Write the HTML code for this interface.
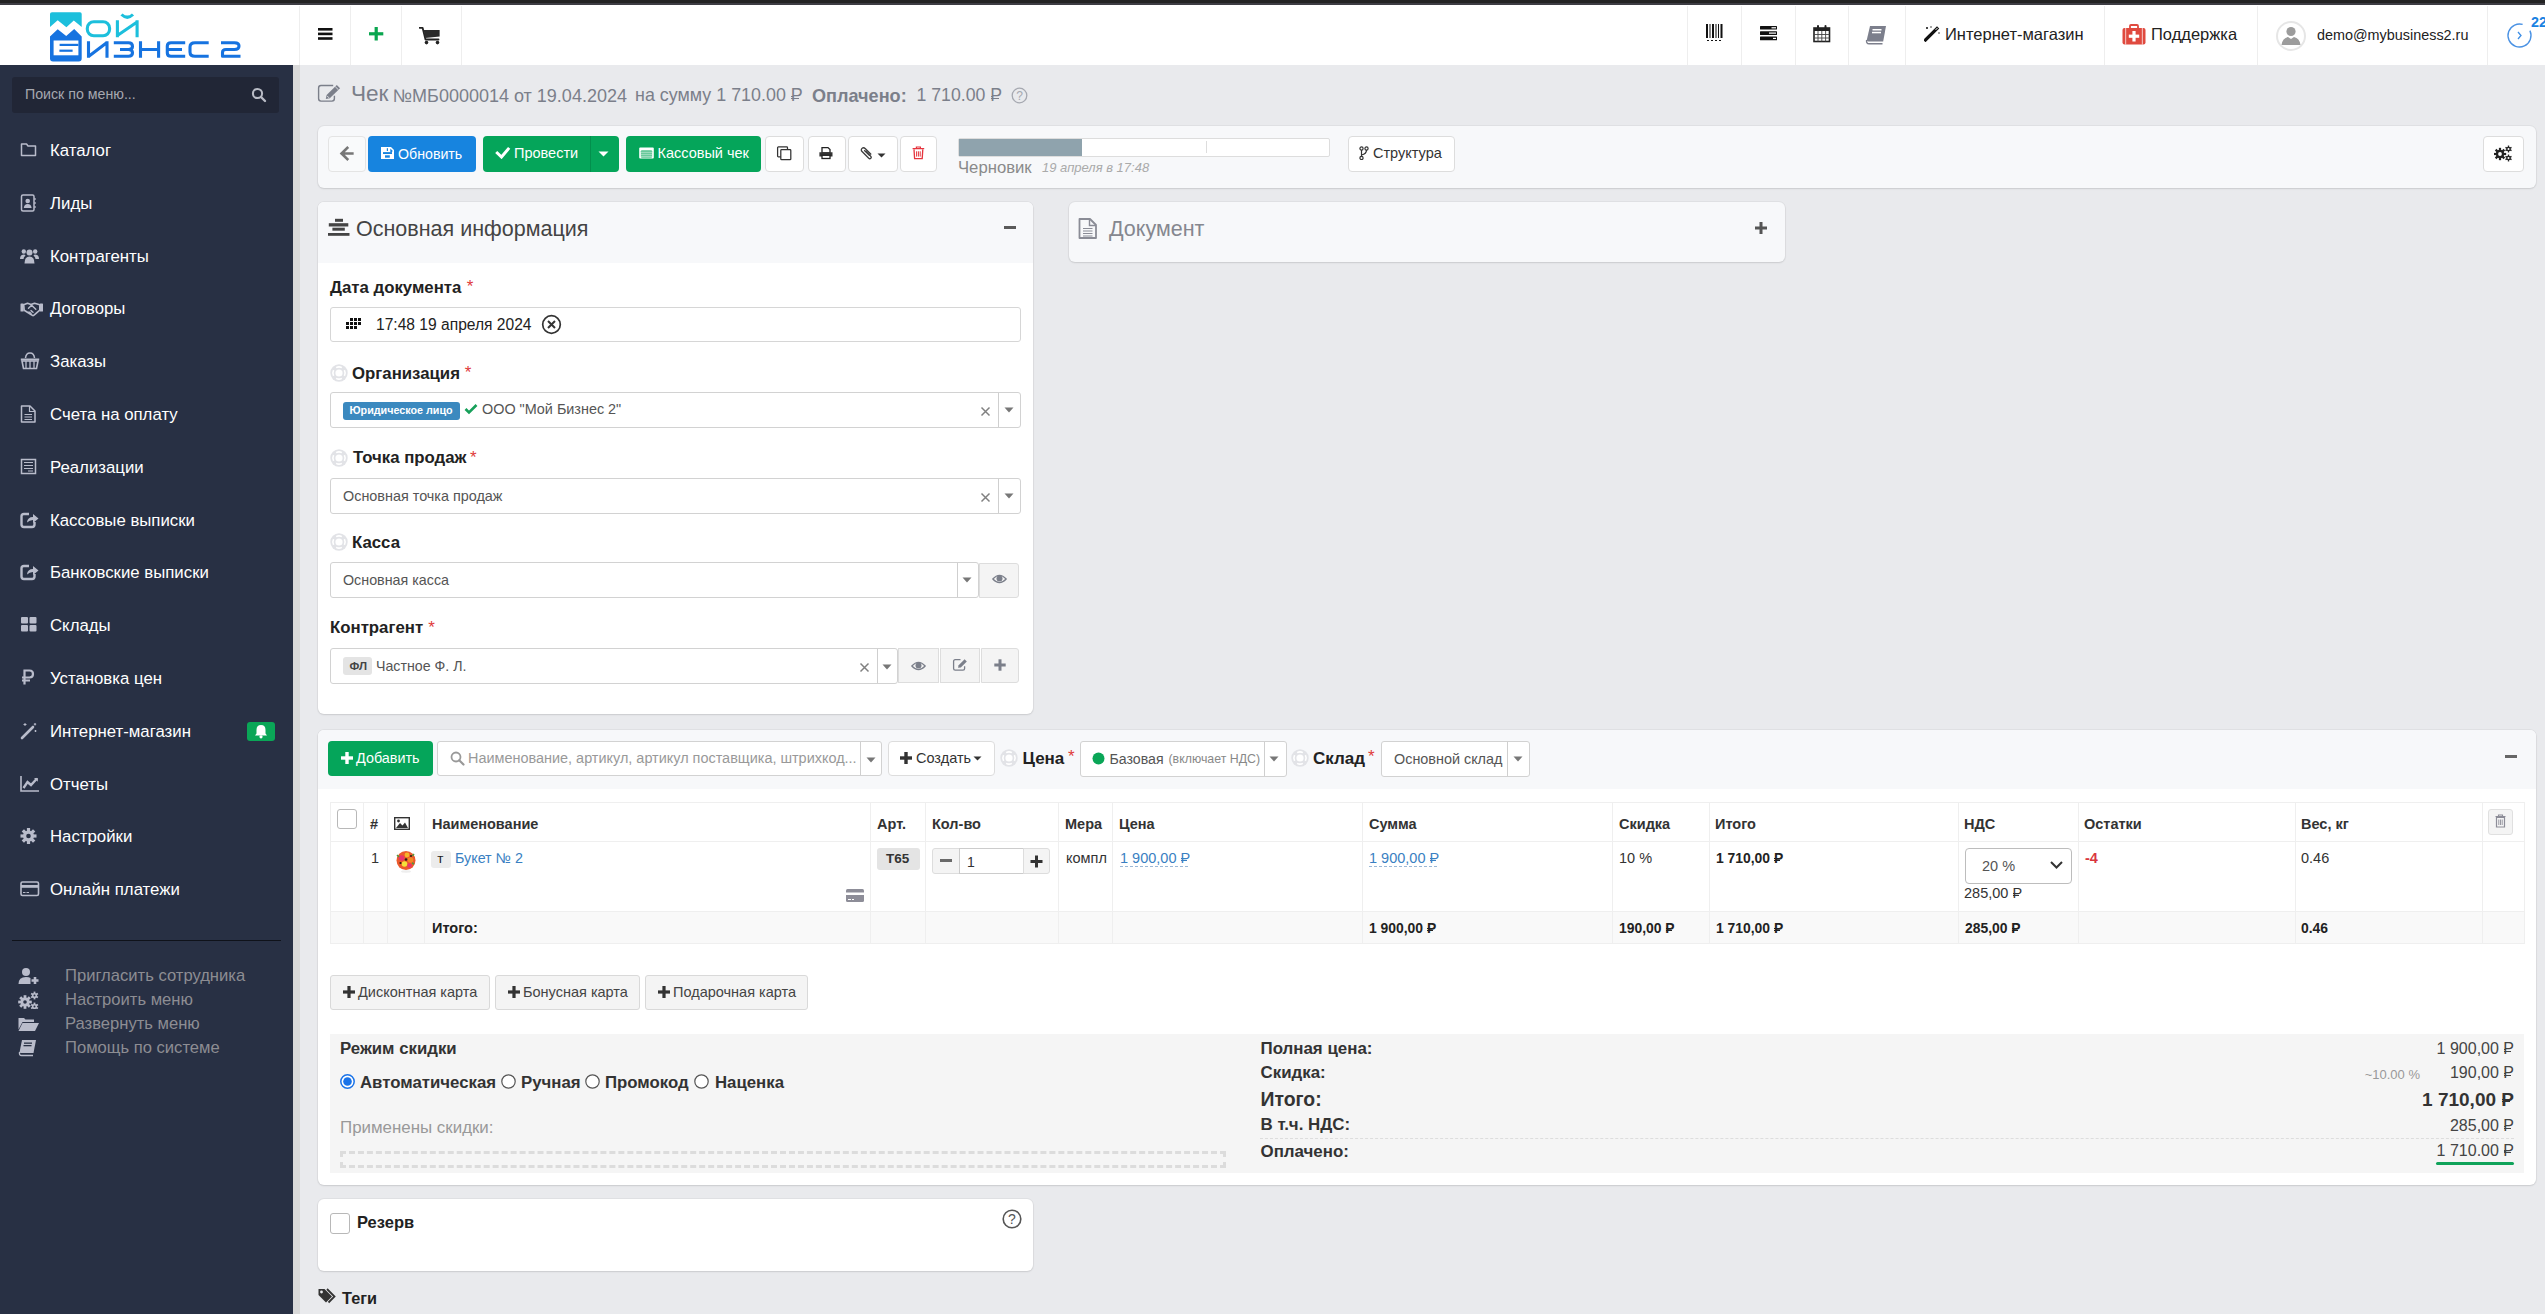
<!DOCTYPE html>
<html><head><meta charset="utf-8">
<style>
*{box-sizing:border-box;margin:0;padding:0}
html,body{width:2545px;height:1314px;overflow:hidden;background:#e9eaed;font-family:"Liberation Sans",sans-serif;color:#333}
.a{position:absolute}
.t{position:absolute;white-space:nowrap;line-height:1}
#topbar{left:0;top:0;width:2545px;height:3px;background:#232323}
#topbar2{left:0;top:3px;width:2545px;height:2px;background:#3d3c43}
#header{left:0;top:5px;width:2545px;height:60px;background:#fff}
.hsep{position:absolute;top:6px;width:1px;height:59px;background:#eeeeee}
#sidebar{left:0;top:65px;width:293px;height:1249px;background:#283044}
#sstrip{left:293px;top:65px;width:7px;height:1249px;background:#d9d9d9}
.panel{position:absolute;background:#fff;border-radius:6px;box-shadow:0 1px 1px rgba(0,0,0,.08)}
.sm{position:absolute;left:50px;font-size:16.8px;color:#fff;white-space:nowrap;line-height:1}
.smi{position:absolute;left:20px}
.sb{position:absolute;left:65px;font-size:16.6px;color:#8d8d93;white-space:nowrap;line-height:1}

.rub{position:relative;display:inline-block}
.rub::after{content:"";position:absolute;left:0.02em;top:0.58em;width:0.45em;height:0.068em;background:currentColor}
.rub::before{content:"";position:absolute;left:0.02em;top:0.47em;width:0.12em;height:0.068em;background:currentColor}
.btn{position:absolute;border-radius:4px}
.bw{background:#fff;border:1px solid #ddd}
.bg{background:#f4f4f4;border:1px solid #ddd}
.inp{position:absolute;background:#fff;border:1px solid #d2d2d2;border-radius:3px}
.vsep{position:absolute;width:1px;background:#cfcfcf}
</style></head>
<body>
<div class="a" id="topbar"></div>
<div class="a" id="topbar2"></div>
<div class="a" id="header"></div>
<div class="hsep" style="left:299px"></div>
<div class="hsep" style="left:350px"></div>
<div class="hsep" style="left:401px"></div>
<div class="hsep" style="left:461px"></div>
<div class="hsep" style="left:1687px"></div>
<div class="hsep" style="left:1741px"></div>
<div class="hsep" style="left:1795px"></div>
<div class="hsep" style="left:1848px"></div>
<div class="hsep" style="left:1905px"></div>
<div class="hsep" style="left:2104px"></div>
<div class="hsep" style="left:2257px"></div>
<div class="hsep" style="left:2487px"></div>

<div class="a" id="sidebar"></div>

<!-- LOGO -->
<svg class="a" style="left:0;top:0" width="260" height="65" viewBox="0 0 260 65">
 <path d="M52 12.3 H80 Q81.7 12.3 81.7 14 V27 L73.8 20.6 L66.4 27.3 L57.7 20.3 L50 27 V14 Q50 12.3 52 12.3 Z" fill="#1cbfdc"/>
 <path d="M50 36.4 L57.7 29.2 L66.2 36 L74.2 28.9 L81.7 36.6 V58.5 Q81.7 61.5 78.7 61.5 H53 Q50 61.5 50 58.5 Z" fill="#1673e0"/>
 <rect x="53.6" y="40.5" width="24.8" height="14.8" fill="#fff"/>
 <rect x="59.6" y="43.8" width="18.8" height="2.2" fill="#1673e0"/>
 <rect x="59.4" y="49.6" width="13.2" height="2.2" fill="#1673e0"/>
 <g fill="none" stroke="#1cbfdc" stroke-width="3.1">
  <rect x="87.3" y="21.8" width="22.3" height="13.9" rx="6.5"/>
  <path d="M117.4 20.3 V37.2 M137.1 20.3 V37.2 M117.4 35.5 L137.1 22"/>
  <path d="M121.5 14.5 Q127.3 20 133 14.5"/>
 </g>
 <g fill="none" stroke="#1673e0" stroke-width="3.1" stroke-linejoin="round">
  <path d="M88.5 41.3 V57.8 M107 41.3 V57.8 M88.5 56.5 L107 42.5"/>
  <path d="M113.8 42.8 H128.5 Q132.5 42.8 132.5 46.5 Q132.5 49.5 128.5 49.5 H120 M128.5 49.5 Q132.5 49.5 132.5 52.8 Q132.5 56.3 128.5 56.3 H113.8"/>
  <path d="M140.5 41.3 V57.8 M158.6 41.3 V57.8 M140.5 49.5 H158.6"/>
  <path d="M185.2 42.8 H171 Q167.3 42.8 167.3 46 V53 Q167.3 56.3 171 56.3 H185.2 M167.3 49.5 H182"/>
  <path d="M208.7 42.8 H195 Q190 42.8 190 47 V52 Q190 56.3 195 56.3 H208.7"/>
  <path d="M221 42.8 H234.5 Q239 42.8 239 46 Q239 49.5 234.5 49.5 H226 Q222.5 49.5 222.5 52.5 V56.3 H240.5"/>
 </g>
</svg>
<!-- header left icons -->
<svg class="a" style="left:318px;top:28px" width="15" height="12"><rect x="0" y="0" width="14.5" height="2.6" fill="#111"/><rect x="0" y="4.6" width="14.5" height="2.6" fill="#111"/><rect x="0" y="9.2" width="14.5" height="2.6" fill="#111"/></svg>
<svg class="a" style="left:369px;top:27px" width="15" height="14"><rect x="5.6" y="0" width="3.2" height="13.5" fill="#0aa64f"/><rect x="0" y="5.2" width="14.3" height="3.2" fill="#0aa64f"/></svg>
<svg class="a" style="left:419px;top:26px" width="22" height="19" viewBox="0 0 22 19"><path d="M0.5 1.8 H3.6 L6.5 13.5 H19.5" fill="none" stroke="#222" stroke-width="1.8" stroke-linecap="round" stroke-linejoin="round"/><path d="M4.6 4 H20.6 V10.5 L6.4 12 Z" fill="#2a2a2a"/><circle cx="7.5" cy="16.6" r="1.8" fill="#222"/><circle cx="18.5" cy="16.6" r="1.8" fill="#222"/></svg>
<!-- header right icons -->
<svg class="a" style="left:1705px;top:24px" width="20" height="18" viewBox="0 0 20 18"><g fill="#111"><rect x="1" y="0" width="2" height="14"/><rect x="4.5" y="0" width="1" height="14"/><rect x="7" y="0" width="2" height="14"/><rect x="10.5" y="0" width="1" height="14"/><rect x="13" y="0" width="1" height="14"/><rect x="15.5" y="0" width="2" height="14"/><rect x="2" y="16" width="2" height="1"/><rect x="6" y="16" width="2" height="1"/><rect x="10" y="16" width="2" height="1"/><rect x="14" y="16" width="2" height="1"/></g></svg>
<svg class="a" style="left:1760px;top:26px" width="18" height="15" viewBox="0 0 18 15"><g fill="#111"><rect x="0" y="0" width="17" height="3.6" rx="0.5"/><rect x="0" y="5.3" width="17" height="3.6" rx="0.5"/><rect x="0" y="10.6" width="17" height="3.6" rx="0.5"/></g><g fill="#fff"><rect x="11.5" y="1.2" width="4.5" height="1.2"/><rect x="9" y="6.5" width="7" height="1.2"/><rect x="13" y="11.8" width="3" height="1.2"/></g></svg>
<svg class="a" style="left:1813px;top:24px" width="18" height="19" viewBox="0 0 18 19"><rect x="1" y="4" width="15.5" height="13.5" fill="none" stroke="#222" stroke-width="1.6"/><rect x="1" y="4" width="15.5" height="3" fill="#222"/><path d="M1 10.5 H16.5 M1 14 H16.5 M5 7 V17.5 M8.8 7 V17.5 M12.6 7 V17.5" stroke="#444" stroke-width="0.9"/><rect x="4" y="1" width="2" height="4.5" rx="1" fill="#222"/><rect x="11.5" y="1" width="2" height="4.5" rx="1" fill="#222"/></svg>
<svg class="a" style="left:1865px;top:25px" width="23" height="20" viewBox="0 0 23 20"><path d="M5 1 H21 L18.2 16.5 H3.5 Q1.6 16.5 1.9 14.5 Z" fill="#7c7f8c"/><path d="M1.6 15 Q1.2 18.8 4 18.8 H17.5" fill="none" stroke="#7c7f8c" stroke-width="1.4"/><rect x="7.5" y="4" width="9" height="1.5" fill="#fff"/><rect x="7" y="6.8" width="9" height="1.5" fill="#fff"/></svg>
<svg class="a" style="left:1924px;top:25px" width="17" height="17" viewBox="0 0 17 17"><path d="M1.5 15 L13 3.5" stroke="#111" stroke-width="3.2" stroke-linecap="square"/><path d="M11.6 4.9 L13.6 2.9" stroke="#fff" stroke-width="1"/><path d="M2 2 L4 4 M4 2 L2 4 M7 1 V3 M15 7 V9" stroke="#333" stroke-width="0.9"/></svg>
<div class="t" style="left:1945px;top:26px;font-size:16.5px;color:#222">Интернет-магазин</div>
<svg class="a" style="left:2122px;top:24px" width="24" height="21" viewBox="0 0 24 21"><path d="M8 4 V2 Q8 1 9 1 H15 Q16 1 16 2 V4" fill="none" stroke="#e04a3f" stroke-width="1.8"/><rect x="0.5" y="4" width="23" height="16.5" rx="2" fill="#e04a3f"/><rect x="3" y="4" width="1.2" height="16.5" fill="#fff" opacity=".6"/><rect x="19.8" y="4" width="1.2" height="16.5" fill="#fff" opacity=".6"/><rect x="10.4" y="7" width="3.2" height="10.5" fill="#fff"/><rect x="6.8" y="10.6" width="10.4" height="3.2" fill="#fff"/></svg>
<div class="t" style="left:2151px;top:26px;font-size:16.5px;color:#222">Поддержка</div>
<svg class="a" style="left:2275px;top:20px" width="32" height="32" viewBox="0 0 32 32"><circle cx="16" cy="16" r="14" fill="#fff" stroke="#e6e6e6" stroke-width="2"/><circle cx="16" cy="11.5" r="4.6" fill="#9c9c9c"/><path d="M6.5 25 Q7.5 18 13 17 L16 19 L19 17 Q24.5 18 25.5 25 Z" fill="#9c9c9c"/></svg>
<div class="t" style="left:2317px;top:28px;font-size:14.4px;color:#222">demo@mybusiness2.ru</div>
<svg class="a" style="left:2506px;top:22px" width="28" height="27" viewBox="0 0 28 27"><circle cx="13.5" cy="13.5" r="11.5" fill="none" stroke="#4a92e4" stroke-width="1.35" stroke-dasharray="62 10" transform="rotate(-25 13.5 13.5)"/><path d="M12 10 L15 13.5 L12 17" fill="none" stroke="#3d8ee6" stroke-width="1.3"/></svg>
<div class="t" style="left:2531px;top:14.8px;font-size:14.3px;font-weight:bold;color:#1a82e2">22</div>

<div class="a" id="sstrip"></div>
<svg class="a" style="left:20px;top:141.0px" width="20" height="18" viewBox="0 0 20 18"><path d="M1.5 3 H6.5 L8 5 H15.5 V14.5 H1.5 Z" fill="none" stroke="#b9bccb" stroke-width="1.5" stroke-linejoin="round"/></svg>
<div class="sm" style="top:143.0px">Каталог</div>
<svg class="a" style="left:20px;top:193.8px" width="20" height="18" viewBox="0 0 20 18"><rect x="1.5" y="1" width="12.5" height="16" rx="1.5" fill="none" stroke="#b9bccb" stroke-width="1.5"/><circle cx="7.7" cy="7" r="2.3" fill="#b9bccb"/><path d="M3.8 14 Q4.2 10 7.7 10 Q11.2 10 11.6 14 Z" fill="#b9bccb"/><path d="M15 4 V6 M15 8 V10 M15 12 V14" stroke="#b9bccb" stroke-width="1.2"/></svg>
<div class="sm" style="top:195.8px">Лиды</div>
<svg class="a" style="left:20px;top:246.6px" width="20" height="18" viewBox="0 0 20 18"><circle cx="9.5" cy="5.5" r="3" fill="#b9bccb"/><circle cx="3.8" cy="4.5" r="2.2" fill="#b9bccb"/><circle cx="15.2" cy="4.5" r="2.2" fill="#b9bccb"/><path d="M4.5 16.5 Q4.5 9.5 9.5 9.5 Q14.5 9.5 14.5 16.5 Z" fill="#b9bccb"/><path d="M0 12 Q0 7.5 3.8 7.5 Q5 7.5 5.5 8.5 Q3.5 10 3.5 12 Z M19 12 Q19 7.5 15.2 7.5 Q14 7.5 13.5 8.5 Q15.5 10 15.5 12 Z" fill="#b9bccb"/></svg>
<div class="sm" style="top:248.6px">Контрагенты</div>
<svg class="a" style="left:20px;top:300.4px" width="24" height="18" viewBox="0 0 24 18"><rect x="0.5" y="3.5" width="3.2" height="8" rx="0.6" fill="#b9bccb"/><rect x="19.8" y="3.5" width="3.2" height="8" rx="0.6" fill="#b9bccb"/><path d="M3.7 4.8 L7.5 3.2 L11 4.6 L14.5 3.2 L19.8 4.8 V10.2 L14 15.2 Q12.8 16 11.8 15 L4.2 10.2 Z" fill="none" stroke="#b9bccb" stroke-width="1.6" stroke-linejoin="round"/><path d="M8.5 8.2 L11.6 5.2 L15.8 9.2 M9 12 L11 13.4 M11 10.6 L13 12.2" fill="none" stroke="#b9bccb" stroke-width="1.4" stroke-linecap="round"/></svg>
<div class="sm" style="top:301.4px">Договоры</div>
<svg class="a" style="left:20px;top:352.2px" width="20" height="18" viewBox="0 0 20 18"><path d="M0.8 6.5 H19.2 V8.5 H0.8 Z" fill="#b9bccb"/><path d="M2 9 L3.5 16.5 H16.5 L18 9 Z" fill="none" stroke="#b9bccb" stroke-width="1.6"/><path d="M6 9 V16 M10 9 V16 M14 9 V16" stroke="#b9bccb" stroke-width="1.3"/><path d="M5.5 6 Q6 1 10 1 Q14 1 14.5 6" fill="none" stroke="#b9bccb" stroke-width="1.5"/></svg>
<div class="sm" style="top:354.2px">Заказы</div>
<svg class="a" style="left:20px;top:405.0px" width="20" height="18" viewBox="0 0 20 18"><path d="M1.5 1 H10 L15 6 V17 H1.5 Z" fill="none" stroke="#b9bccb" stroke-width="1.5" stroke-linejoin="round"/><path d="M9.5 1 V6.5 H15" fill="none" stroke="#b9bccb" stroke-width="1.2"/><path d="M4.5 9.5 H12 M4.5 12 H12 M4.5 14.5 H12" stroke="#b9bccb" stroke-width="1.2"/></svg>
<div class="sm" style="top:407.0px">Счета на оплату</div>
<svg class="a" style="left:20px;top:457.8px" width="20" height="18" viewBox="0 0 20 18"><rect x="1.5" y="1.5" width="14" height="14" fill="none" stroke="#b9bccb" stroke-width="1.5"/><path d="M4 4.5 H13 M4 7.5 H13 M4 10.5 H13 M8 13 H13" stroke="#b9bccb" stroke-width="1.2"/></svg>
<div class="sm" style="top:459.8px">Реализации</div>
<svg class="a" style="left:20px;top:510.6px" width="20" height="18" viewBox="0 0 20 18"><path d="M9 3 H4 Q1.5 3 1.5 5.5 V13.5 Q1.5 16 4 16 H12 Q14.5 16 14.5 13.5 V11" fill="none" stroke="#b9bccb" stroke-width="2.4"/><path d="M7 11.5 Q7.5 6 13 6 V3 L18.5 7.5 L13 12 V9 Q9.5 9 7 11.5 Z" fill="#b9bccb"/></svg>
<div class="sm" style="top:512.6px">Кассовые выписки</div>
<svg class="a" style="left:20px;top:563.4px" width="20" height="18" viewBox="0 0 20 18"><path d="M9 3 H4 Q1.5 3 1.5 5.5 V13.5 Q1.5 16 4 16 H12 Q14.5 16 14.5 13.5 V11" fill="none" stroke="#b9bccb" stroke-width="2.4"/><path d="M7 11.5 Q7.5 6 13 6 V3 L18.5 7.5 L13 12 V9 Q9.5 9 7 11.5 Z" fill="#b9bccb"/></svg>
<div class="sm" style="top:565.4px">Банковские выписки</div>
<svg class="a" style="left:20px;top:616.2px" width="20" height="18" viewBox="0 0 20 18"><rect x="1" y="1" width="7" height="6.5" rx="1" fill="#b9bccb"/><rect x="9.5" y="1" width="7" height="6.5" rx="1" fill="#b9bccb"/><rect x="1" y="9" width="7" height="6.5" rx="1" fill="#b9bccb"/><rect x="9.5" y="9" width="7" height="6.5" rx="1" fill="#b9bccb"/></svg>
<div class="sm" style="top:618.2px">Склады</div>
<svg class="a" style="left:20px;top:669.0px" width="20" height="18" viewBox="0 0 20 18"><path d="M4.5 15.5 V1.5 H9.5 Q13 1.5 13 5 Q13 8.5 9.5 8.5 H2 M2 11.5 H10" fill="none" stroke="#b9bccb" stroke-width="2.2"/></svg>
<div class="sm" style="top:671.0px">Установка цен</div>
<svg class="a" style="left:20px;top:721.8px" width="20" height="18" viewBox="0 0 20 18"><path d="M2 16 L13 5" stroke="#b9bccb" stroke-width="2.6" stroke-linecap="round"/><path d="M5 1 V4 M3.5 2.5 H6.5 M15 1 V3.5 M13.8 2.2 H16.2 M15.5 8 V10 M14.5 9 H16.5" stroke="#b9bccb" stroke-width="1"/></svg>
<div class="sm" style="top:723.8px">Интернет-магазин</div>
<svg class="a" style="left:20px;top:774.6px" width="20" height="18" viewBox="0 0 20 18"><path d="M1 1 V16 H19" fill="none" stroke="#b9bccb" stroke-width="1.6"/><path d="M3.5 13 L7.5 7 L11 10 L17 3.5" fill="none" stroke="#b9bccb" stroke-width="2.4"/><path d="M14 3 H17.8 V6.8 Z" fill="#b9bccb"/></svg>
<div class="sm" style="top:776.6px">Отчеты</div>
<svg class="a" style="left:20px;top:827.4px" width="20" height="18" viewBox="0 0 20 18"><g transform="translate(8.5 9)"><circle r="5.5" fill="#b9bccb"/><g fill="#b9bccb"><rect x="-1.6" y="-8" width="3.2" height="16"/><rect x="-1.6" y="-8" width="3.2" height="16" transform="rotate(45)"/><rect x="-1.6" y="-8" width="3.2" height="16" transform="rotate(90)"/><rect x="-1.6" y="-8" width="3.2" height="16" transform="rotate(135)"/></g><circle r="2.3" fill="#283044"/></g></svg>
<div class="sm" style="top:829.4px">Настройки</div>
<svg class="a" style="left:20px;top:880.2px" width="20" height="18" viewBox="0 0 20 18"><rect x="1" y="2" width="17.5" height="13.5" rx="1.5" fill="none" stroke="#b9bccb" stroke-width="1.6"/><rect x="1" y="5" width="17.5" height="2.8" fill="#b9bccb"/><path d="M3 12.5 H5.5 M6.5 12.5 H9" stroke="#b9bccb" stroke-width="1"/></svg>
<div class="sm" style="top:882.2px">Онлайн платежи</div>
<div class="a" style="left:247px;top:722px;width:28px;height:19px;background:#0aa657;border-radius:3px"></div>
<svg class="a" style="left:254px;top:724px" width="14" height="15" viewBox="0 0 14 15"><path d="M7 1 Q2.5 1 2.5 6 V9.5 L1 11.5 H13 L11.5 9.5 V6 Q11.5 1 7 1 Z" fill="#fff"/><circle cx="7" cy="12.8" r="1.6" fill="#fff"/></svg>
<div class="a" style="left:12px;top:940px;width:269px;height:1px;background:#0f121a"></div>
<svg class="a" style="left:18px;top:967.0px" width="22" height="18" viewBox="0 0 22 18"><circle cx="8" cy="5" r="4" fill="#b9bccb"/><path d="M0.5 17 Q0.5 10 8 10 Q11 10 12.5 11 V17 Z" fill="#b9bccb"/><path d="M17 10 V17 M13.5 13.5 H20.5" stroke="#b9bccb" stroke-width="2.6"/></svg>
<div class="sb" style="top:968.0px">Пригласить сотрудника</div>
<svg class="a" style="left:18px;top:991.0px" width="22" height="18" viewBox="0 0 22 18"><g transform="translate(7 11)"><circle r="4.5" fill="#b9bccb"/><g fill="#b9bccb"><rect x="-1.4" y="-6.8" width="2.8" height="13.6"/><rect x="-1.4" y="-6.8" width="2.8" height="13.6" transform="rotate(45)"/><rect x="-1.4" y="-6.8" width="2.8" height="13.6" transform="rotate(90)"/><rect x="-1.4" y="-6.8" width="2.8" height="13.6" transform="rotate(135)"/></g><circle r="1.8" fill="#283044"/></g><g transform="translate(16.5 4.5)"><circle r="2.6" fill="#b9bccb"/><g fill="#b9bccb"><rect x="-0.9" y="-3.9" width="1.8" height="7.8"/><rect x="-0.9" y="-3.9" width="1.8" height="7.8" transform="rotate(60)"/><rect x="-0.9" y="-3.9" width="1.8" height="7.8" transform="rotate(120)"/></g><circle r="1" fill="#283044"/></g><g transform="translate(16.5 15.5)"><circle r="2.6" fill="#b9bccb"/><g fill="#b9bccb"><rect x="-0.9" y="-3.9" width="1.8" height="7.8"/><rect x="-0.9" y="-3.9" width="1.8" height="7.8" transform="rotate(60)"/><rect x="-0.9" y="-3.9" width="1.8" height="7.8" transform="rotate(120)"/></g><circle r="1" fill="#283044"/></g></svg>
<div class="sb" style="top:992.0px">Настроить меню</div>
<svg class="a" style="left:18px;top:1015.0px" width="22" height="18" viewBox="0 0 22 18"><path d="M0.5 3 H6 L7.5 4.5 H16 V7 H4.5 L0.5 14.5 Z" fill="#b9bccb"/><path d="M4.5 8 H21 L17 16 H0.5 Z" fill="#b9bccb"/></svg>
<div class="sb" style="top:1016.0px">Развернуть меню</div>
<svg class="a" style="left:18px;top:1039.0px" width="22" height="18" viewBox="0 0 22 18"><path d="M4 1 H18 L15.5 14 H3 Q1.5 14 1.7 12.5 Z" fill="#b9bccb"/><path d="M1.5 13 Q1 16.5 3.5 16.5 H15" fill="none" stroke="#b9bccb" stroke-width="1.3"/><rect x="6" y="3.5" width="8" height="1.3" fill="#283044"/><rect x="5.5" y="6" width="8" height="1.3" fill="#283044"/></svg>
<div class="sb" style="top:1040.0px">Помощь по системе</div>
<div class="a" style="left:12px;top:77px;width:267px;height:36px;background:#212636;border-radius:3px"></div>
<div class="t" style="left:25px;top:87px;font-size:14.2px;color:#a6a8b0">Поиск по меню...</div>
<svg class="a" style="left:251px;top:87px" width="16" height="16" viewBox="0 0 16 16"><circle cx="6.5" cy="6.5" r="4.6" fill="none" stroke="#b9bcc6" stroke-width="2"/><path d="M10 10 L14 14" stroke="#b9bcc6" stroke-width="2.4" stroke-linecap="round"/></svg>

<div class="a" style="left:318px;top:126px;width:2218px;height:62px;background:#f7f8fa;border-radius:6px;box-shadow:0 0 0 1px rgba(0,0,0,.035),0 1px 2px rgba(0,0,0,.10);"></div>
<div class="a" style="left:318px;top:202px;width:715px;height:512px;background:#fff;border-radius:6px;box-shadow:0 0 0 1px rgba(0,0,0,.035),0 1px 2px rgba(0,0,0,.10);"></div>
<div class="a" style="left:318px;top:202px;width:715px;height:61px;background:#f7f8fa;border-radius:6px 6px 0 0;"></div>
<div class="a" style="left:1069px;top:202px;width:716px;height:60px;background:#f7f8fa;border-radius:6px;box-shadow:0 0 0 1px rgba(0,0,0,.035),0 1px 2px rgba(0,0,0,.10);"></div>
<div class="a" style="left:318px;top:730px;width:2218px;height:455px;background:#fff;border-radius:6px;box-shadow:0 0 0 1px rgba(0,0,0,.035),0 1px 2px rgba(0,0,0,.10);"></div>
<div class="a" style="left:318px;top:730px;width:2218px;height:59px;background:#f7f8fa;border-radius:6px 6px 0 0;"></div>
<div class="a" style="left:318px;top:1199px;width:715px;height:72px;background:#fff;border-radius:6px;box-shadow:0 0 0 1px rgba(0,0,0,.035),0 1px 2px rgba(0,0,0,.10);"></div>
<svg class="a" style="left:314px;top:80px" width="32" height="28" viewBox="0 0 32 28"><path d="M19.2 5.5 H7 Q4.6 5.5 4.6 8 V18.6 Q4.6 21.1 7 21.1 H18 Q20.4 21.1 20.4 18.6 V15.8" fill="none" stroke="#7b7f8a" stroke-width="1.4"/><path d="M11.8 18.9 L12.6 15.1 L22.8 4.9 L26.1 8.2 L15.8 18.2 Z" fill="#7b7f8a"/><path d="M21.2 6.6 L24.5 9.9" stroke="#e9eaed" stroke-width="0.9"/><path d="M13.1 15.9 L15.1 17.9" stroke="#e9eaed" stroke-width="0.9"/></svg>
<div class="t" style="left:351px;top:83.17px;font-size:22.6px;color:#7b7f8a;">Чек</div>
<div class="t" style="left:392.8px;top:87.06px;font-size:18px;color:#7b7f8a;">№МБ0000014 от 19.04.2024</div>
<div class="t" style="left:635px;top:87.15px;font-size:17.9px;color:#7b7f8a;">на сумму 1 710.00 <span class="rub">Р</span></div>
<div class="t" style="left:812px;top:86.98px;font-size:18.1px;color:#7b7f8a;font-weight:bold;">Оплачено:</div>
<div class="t" style="left:916.5px;top:87.32px;font-size:17.7px;color:#7b7f8a;">1 710.00 <span class="rub">Р</span></div>
<svg class="a" style="left:1011px;top:87px" width="17" height="17" viewBox="0 0 17 17"><circle cx="8.5" cy="8.5" r="7.3" fill="none" stroke="#a5a8b0" stroke-width="1.3"/><text x="8.5" y="13" font-family="Liberation Sans" font-size="12" fill="#a5a8b0" text-anchor="middle">?</text></svg>
<div class="a" style="left:328px;top:136px;width:38px;height:36px;background:#f9fafb;border:1px solid #e4e4e4;border-radius:4px;"></div>
<svg class="a" style="left:339px;top:146px" width="15" height="15" viewBox="0 0 15 15"><path d="M8.3 1.9 L2.6 7.5 L8.3 13.1 M3 7.5 H13.3" fill="none" stroke="#777" stroke-width="2.7" stroke-linejoin="miter" stroke-linecap="square"/></svg>
<div class="a" style="left:368px;top:136px;width:108px;height:36px;background:#1784df;border-radius:4px;"></div>
<svg class="a" style="left:381px;top:147px" width="13" height="12" viewBox="0 0 13 12"><path d="M0 0 H10 L13 3 V12 H0 Z" fill="#fff"/><rect x="2" y="5.1" width="9" height="1.9" fill="#1784df"/><rect x="4" y="8.3" width="4.8" height="2.4" fill="#1784df"/><rect x="5.8" y="1.2" width="1.2" height="2.8" fill="#1784df"/><path d="M9.3 1.5 L11.3 3.5 V5.1 H9.3 Z" fill="#1784df"/></svg>
<div class="t" style="left:398px;top:146.58px;font-size:14.2px;color:#fff;">Обновить</div>
<div class="a" style="left:483px;top:136px;width:136px;height:36px;background:#05a55a;border-radius:4px;"></div>
<div class="a" style="left:590px;top:136px;width:1px;height:36px;background:#038f4d;"></div>
<svg class="a" style="left:495px;top:146px" width="16" height="13" viewBox="0 0 16 13"><path d="M2.3 7 L6.5 11 L13.2 3" fill="none" stroke="#fff" stroke-width="3" stroke-linecap="square"/></svg>
<div class="t" style="left:514px;top:146.32px;font-size:14.5px;color:#fff;">Провести</div>
<svg class="a" style="left:598px;top:151px" width="12" height="6" viewBox="0 0 12 6"><path d="M0.5 0.5 H10.5 L5.5 5.5 Z" fill="#fff"/></svg>
<div class="a" style="left:626px;top:136px;width:135px;height:36px;background:#05a55a;border-radius:4px;"></div>
<svg class="a" style="left:639px;top:146.5px" width="15" height="12" viewBox="0 0 15 12"><rect x="0.2" y="0.5" width="14.6" height="11" rx="1" fill="#fff"/><rect x="1.9" y="3.4" width="11.2" height="7.1" rx="0.8" fill="#05a55a"/><path d="M2 5.1 H13 M2 7.1 H13 M2 9.1 H13" stroke="#fff" stroke-width="1"/></svg>
<div class="t" style="left:657.5px;top:146.32px;font-size:14.5px;color:#fff;">Кассовый чек</div>
<div class="a" style="left:765px;top:136px;width:39px;height:36px;background:#fff;border:1px solid #ddd;border-radius:4px;"></div>
<svg class="a" style="left:776px;top:145px" width="16" height="16" viewBox="0 0 16 16"><rect x="1.6" y="1.9" width="9.9" height="10" rx="0.8" fill="none" stroke="#333" stroke-width="1.25"/><rect x="4.8" y="4.6" width="10" height="10.1" rx="0.8" fill="#fff" stroke="#333" stroke-width="1.25"/></svg>
<div class="a" style="left:808px;top:136px;width:38px;height:36px;background:#fff;border:1px solid #ddd;border-radius:4px;"></div>
<svg class="a" style="left:818px;top:145px" width="16" height="16" viewBox="0 0 16 16"><path d="M4 2.6 H10 L12 4.6 V8 H4 Z" fill="none" stroke="#222" stroke-width="1.3"/><path d="M1.4 7.3 H14.5 V11.5 H12 V10.3 H4 V11.5 H1.4 Z" fill="#333"/><rect x="4" y="10.3" width="8" height="3.2" fill="#fff" stroke="#222" stroke-width="1.3"/></svg>
<div class="a" style="left:848px;top:136px;width:50px;height:36px;background:#fff;border:1px solid #ddd;border-radius:4px;"></div>
<svg class="a" style="left:860px;top:146px" width="14" height="14" viewBox="0 0 14 14"><path d="M5.5 5 L10.5 10 Q11.8 11.3 10.8 12.3 Q9.8 13.3 8.5 12 L2.3 5.8 Q0.5 4 2 2.4 Q3.6 0.9 5.4 2.7 L11.2 8.5 M4.2 4.2 L9.6 9.6" fill="none" stroke="#3c3c3c" stroke-width="1.3"/></svg>
<svg class="a" style="left:877px;top:153px" width="9" height="5" viewBox="0 0 9 5"><path d="M0.5 0.5 H8.5 L4.5 4.5 Z" fill="#333"/></svg>
<div class="a" style="left:900px;top:136px;width:37px;height:36px;background:#fff;border:1px solid #ddd;border-radius:4px;"></div>
<svg class="a" style="left:912px;top:146px" width="13" height="14" viewBox="0 0 13 14"><path d="M0.6 2.6 H12.2 M4.4 2.4 V1 H8.4 V2.4" fill="none" stroke="#e5343d" stroke-width="1.2"/><path d="M2 3.4 L2.6 12.6 H10.2 L10.8 3.4" fill="none" stroke="#e5343d" stroke-width="1.3"/><path d="M4.6 5.3 V10.6 M6.4 5.3 V10.6 M8.2 5.3 V10.6" stroke="#e5343d" stroke-width="1"/></svg>
<div class="a" style="left:958px;top:138px;width:372px;height:19px;background:#fff;border:1px solid #ddd;border-radius:2px;"></div>
<div class="a" style="left:959px;top:139px;width:123px;height:17px;background:#8fa3ad;"></div>
<div class="a" style="left:1206px;top:141px;width:1px;height:12px;background:#ddd;"></div>
<div class="t" style="left:958px;top:160.36px;font-size:16.7px;color:#8a8a8a;">Черновик</div>
<div class="t" style="left:1042px;top:160.79px;font-size:13px;color:#aaa;font-style:italic;">19 апреля в 17:48</div>
<div class="a" style="left:1348px;top:136px;width:107px;height:36px;background:#fff;border:1px solid #ddd;border-radius:4px;"></div>
<svg class="a" style="left:1359px;top:146px" width="10" height="14" viewBox="0 0 10 14"><circle cx="2.5" cy="2.5" r="1.6" fill="none" stroke="#333" stroke-width="1.2"/><circle cx="7.5" cy="2.5" r="1.6" fill="none" stroke="#333" stroke-width="1.2"/><circle cx="2.5" cy="12" r="1.6" fill="none" stroke="#333" stroke-width="1.2"/><path d="M2.5 4 V10.5 M7.5 4 Q7.5 8 2.5 9" fill="none" stroke="#333" stroke-width="1.2"/></svg>
<div class="t" style="left:1373px;top:146.32px;font-size:14.5px;color:#333;">Структура</div>
<div class="a" style="left:2483px;top:136px;width:41px;height:36px;background:#fff;border:1px solid #ddd;border-radius:4px;"></div>
<svg class="a" style="left:2494px;top:145px" width="20" height="18" viewBox="0 0 20 18"><g transform="translate(6 9)"><circle r="4.2" fill="#222"/><rect x="-1.1" y="-6.180000000000001" width="2.2" height="12.360000000000001" fill="#222" transform="rotate(0.0)"/><rect x="-1.1" y="-6.180000000000001" width="2.2" height="12.360000000000001" fill="#222" transform="rotate(45.0)"/><rect x="-1.1" y="-6.180000000000001" width="2.2" height="12.360000000000001" fill="#222" transform="rotate(90.0)"/><rect x="-1.1" y="-6.180000000000001" width="2.2" height="12.360000000000001" fill="#222" transform="rotate(135.0)"/><circle r="1.8900000000000001" fill="#fff"/></g><g transform="translate(14.5 4)"><circle r="2.2" fill="#222"/><rect x="-0.7" y="-3.46" width="1.4" height="6.92" fill="#222" transform="rotate(0.0)"/><rect x="-0.7" y="-3.46" width="1.4" height="6.92" fill="#222" transform="rotate(60.0)"/><rect x="-0.7" y="-3.46" width="1.4" height="6.92" fill="#222" transform="rotate(120.0)"/><circle r="0.9900000000000001" fill="#fff"/></g><g transform="translate(14.5 13)"><circle r="2.2" fill="#222"/><rect x="-0.7" y="-3.46" width="1.4" height="6.92" fill="#222" transform="rotate(0.0)"/><rect x="-0.7" y="-3.46" width="1.4" height="6.92" fill="#222" transform="rotate(60.0)"/><rect x="-0.7" y="-3.46" width="1.4" height="6.92" fill="#222" transform="rotate(120.0)"/><circle r="0.9900000000000001" fill="#fff"/></g></svg>
<svg class="a" style="left:328px;top:218px" width="23" height="19" viewBox="0 0 23 19"><rect x="7" y="0.8" width="8" height="3" fill="#444"/><rect x="0.8" y="5.2" width="19.5" height="3.3" fill="#444"/><rect x="4.4" y="9.7" width="12.4" height="3" fill="#444"/><rect x="0" y="15" width="21.5" height="2.8" fill="#444"/></svg>
<div class="t" style="left:356px;top:218.50px;font-size:21.5px;color:#444;">Основная информация</div>
<div class="a" style="left:1004px;top:226px;width:12px;height:3px;background:#5a5a5a;"></div>
<div class="t" style="left:330px;top:279.58px;font-size:16.8px;color:#222;font-weight:bold;">Дата документа</div>
<div class="t" style="left:466.8px;top:277.91px;font-size:17px;color:#e03b3b;">*</div>
<div class="inp" style="left:330px;top:307px;width:691px;height:35px;border-color:#d6d6d6"></div>
<svg class="a" style="left:346px;top:318px" width="17" height="11" viewBox="0 0 17 11"><g fill="#111"><rect x="0" y="4" width="3" height="3"/><rect x="4" y="0" width="3" height="3"/><rect x="8" y="0" width="3" height="3"/><rect x="12" y="0" width="3" height="3"/><rect x="4" y="4" width="3" height="3"/><rect x="8" y="4" width="3" height="3"/><rect x="12" y="4" width="3" height="3"/><rect x="0" y="8" width="3" height="3"/><rect x="4" y="8" width="3" height="3"/><rect x="8" y="8" width="3" height="3"/></g></svg>
<div class="t" style="left:376px;top:317.09px;font-size:15.6px;color:#222;">17:48 19 апреля 2024</div>
<svg class="a" style="left:541px;top:314px" width="21" height="21" viewBox="0 0 21 21"><circle cx="10.5" cy="10.5" r="8.8" fill="none" stroke="#333" stroke-width="1.7"/><path d="M7 7 L14 14 M14 7 L7 14" stroke="#333" stroke-width="2"/></svg>
<svg class="a" style="left:329.5px;top:364px" width="18" height="18" viewBox="0 0 18 18"><circle cx="9.0" cy="9.0" r="8.7" fill="#e2e3e7"/><circle cx="9.0" cy="9.0" r="3.6" fill="#fff"/><path d="M14.39 6.14 A6.1 6.1 0 0 1 14.39 11.86" fill="none" stroke="#fff" stroke-width="1.6"/><path d="M11.86 14.39 A6.1 6.1 0 0 1 6.14 14.39" fill="none" stroke="#fff" stroke-width="1.6"/><path d="M3.61 11.86 A6.1 6.1 0 0 1 3.61 6.14" fill="none" stroke="#fff" stroke-width="1.6"/><path d="M6.14 3.61 A6.1 6.1 0 0 1 11.86 3.61" fill="none" stroke="#fff" stroke-width="1.6"/></svg>
<div class="t" style="left:352px;top:365.58px;font-size:16.8px;color:#222;font-weight:bold;">Организация</div>
<div class="t" style="left:464.7px;top:363.91px;font-size:17px;color:#e03b3b;">*</div>
<div class="inp" style="left:330px;top:392px;width:691px;height:36px"></div>
<div class="a" style="left:998px;top:393px;width:1px;height:34px;background:#cfcfcf;"></div>
<div class="a" style="left:343px;top:402px;width:117px;height:18px;background:#3b89bf;border-radius:3px;"></div>
<div class="t" style="left:349.5px;top:405.40px;font-size:10.75px;color:#fff;font-weight:bold;">Юридическое лицо</div>
<svg class="a" style="left:464px;top:403px" width="14" height="12" viewBox="0 0 14 12"><path d="M1.5 6 L5 9.5 L12.5 2" fill="none" stroke="#17a05a" stroke-width="2.6"/></svg>
<div class="t" style="left:482px;top:401.81px;font-size:14.4px;color:#555;">ООО "Мой Бизнес 2"</div>
<svg class="a" style="left:980px;top:406px" width="11" height="11" viewBox="0 0 11 11"><path d="M1.5 1.5 L9.5 9.5 M9.5 1.5 L1.5 9.5" stroke="#808080" stroke-width="1.5"/></svg>
<svg class="a" style="left:1004px;top:407px" width="10" height="6" viewBox="0 0 10 6"><path d="M0.5 0.5 H9.5 L5 5.5 Z" fill="#777"/></svg>
<svg class="a" style="left:329.5px;top:448.5px" width="18" height="18" viewBox="0 0 18 18"><circle cx="9.0" cy="9.0" r="8.7" fill="#e2e3e7"/><circle cx="9.0" cy="9.0" r="3.6" fill="#fff"/><path d="M14.39 6.14 A6.1 6.1 0 0 1 14.39 11.86" fill="none" stroke="#fff" stroke-width="1.6"/><path d="M11.86 14.39 A6.1 6.1 0 0 1 6.14 14.39" fill="none" stroke="#fff" stroke-width="1.6"/><path d="M3.61 11.86 A6.1 6.1 0 0 1 3.61 6.14" fill="none" stroke="#fff" stroke-width="1.6"/><path d="M6.14 3.61 A6.1 6.1 0 0 1 11.86 3.61" fill="none" stroke="#fff" stroke-width="1.6"/></svg>
<div class="t" style="left:353px;top:450.28px;font-size:16.8px;color:#222;font-weight:bold;">Точка продаж</div>
<div class="t" style="left:470px;top:448.61px;font-size:17px;color:#e03b3b;">*</div>
<div class="inp" style="left:330px;top:478px;width:691px;height:36px"></div>
<div class="a" style="left:998px;top:479px;width:1px;height:34px;background:#cfcfcf;"></div>
<div class="t" style="left:343px;top:488.61px;font-size:14.4px;color:#555;">Основная точка продаж</div>
<svg class="a" style="left:980px;top:492px" width="11" height="11" viewBox="0 0 11 11"><path d="M1.5 1.5 L9.5 9.5 M9.5 1.5 L1.5 9.5" stroke="#808080" stroke-width="1.5"/></svg>
<svg class="a" style="left:1004px;top:493px" width="10" height="6" viewBox="0 0 10 6"><path d="M0.5 0.5 H9.5 L5 5.5 Z" fill="#777"/></svg>
<svg class="a" style="left:329.5px;top:533px" width="18" height="18" viewBox="0 0 18 18"><circle cx="9.0" cy="9.0" r="8.7" fill="#e2e3e7"/><circle cx="9.0" cy="9.0" r="3.6" fill="#fff"/><path d="M14.39 6.14 A6.1 6.1 0 0 1 14.39 11.86" fill="none" stroke="#fff" stroke-width="1.6"/><path d="M11.86 14.39 A6.1 6.1 0 0 1 6.14 14.39" fill="none" stroke="#fff" stroke-width="1.6"/><path d="M3.61 11.86 A6.1 6.1 0 0 1 3.61 6.14" fill="none" stroke="#fff" stroke-width="1.6"/><path d="M6.14 3.61 A6.1 6.1 0 0 1 11.86 3.61" fill="none" stroke="#fff" stroke-width="1.6"/></svg>
<div class="t" style="left:352px;top:535.18px;font-size:16.8px;color:#222;font-weight:bold;">Касса</div>
<div class="inp" style="left:330px;top:562px;width:649px;height:36px"></div>
<div class="a" style="left:957px;top:563px;width:1px;height:34px;background:#cfcfcf;"></div>
<div class="t" style="left:343px;top:573.09px;font-size:14.3px;color:#555;">Основная касса</div>
<svg class="a" style="left:962px;top:577px" width="10" height="6" viewBox="0 0 10 6"><path d="M0.5 0.5 H9.5 L5 5.5 Z" fill="#777"/></svg>
<div class="a" style="left:979px;top:563px;width:40px;height:35px;background:#f4f4f4;border:1px solid #ddd;border-radius:0 3px 3px 0;"></div>
<svg class="a" style="left:991.5px;top:574px" width="15" height="10" viewBox="0 0 15 10"><path d="M0.8 5 Q7.5 -2.2 14.2 5 Q7.5 12.2 0.8 5 Z" fill="none" stroke="#7b7f8a" stroke-width="1.2"/><circle cx="7.5" cy="4.6" r="3" fill="#7b7f8a"/></svg>
<div class="t" style="left:330px;top:620.28px;font-size:16.8px;color:#222;font-weight:bold;">Контрагент</div>
<div class="t" style="left:428.3px;top:618.61px;font-size:17px;color:#e03b3b;">*</div>
<div class="inp" style="left:330px;top:648px;width:568px;height:36px"></div>
<div class="a" style="left:877px;top:649px;width:1px;height:34px;background:#cfcfcf;"></div>
<div class="a" style="left:343px;top:657px;width:29px;height:18px;background:#e4e4e4;border-radius:3px;"></div>
<div class="t" style="left:349.5px;top:660.76px;font-size:11.5px;color:#444;font-weight:bold;">ФЛ</div>
<div class="t" style="left:376px;top:658.78px;font-size:14.2px;color:#555;">Частное Ф. Л.</div>
<svg class="a" style="left:858.5px;top:662px" width="11" height="11" viewBox="0 0 11 11"><path d="M1.5 1.5 L9.5 9.5 M9.5 1.5 L1.5 9.5" stroke="#808080" stroke-width="1.5"/></svg>
<svg class="a" style="left:882px;top:664px" width="10" height="6" viewBox="0 0 10 6"><path d="M0.5 0.5 H9.5 L5 5.5 Z" fill="#777"/></svg>
<div class="a" style="left:898px;top:648px;width:41px;height:35px;background:#f4f4f4;border:1px solid #ddd;"></div>
<svg class="a" style="left:911px;top:660.5px" width="15" height="10" viewBox="0 0 15 10"><path d="M0.8 5 Q7.5 -2.2 14.2 5 Q7.5 12.2 0.8 5 Z" fill="none" stroke="#7b7f8a" stroke-width="1.2"/><circle cx="7.5" cy="4.6" r="3" fill="#7b7f8a"/></svg>
<div class="a" style="left:940px;top:648px;width:40px;height:35px;background:#f4f4f4;border:1px solid #ddd;"></div>
<svg class="a" style="left:952px;top:658px" width="16" height="14" viewBox="0 0 16 14"><path d="M8.5 1.7 H3.2 Q1.6 1.7 1.6 3.3 V10.6 Q1.6 12.2 3.2 12.2 H11 Q12.6 12.2 12.6 10.6 V8.2" fill="none" stroke="#7b7f8a" stroke-width="1.3"/><path d="M6 9.8 L6.6 7.2 L12.6 1.2 L14.8 3.4 L8.8 9.4 Z" fill="#7b7f8a"/></svg>
<div class="a" style="left:981px;top:648px;width:38px;height:35px;background:#f4f4f4;border:1px solid #ddd;border-radius:0 3px 3px 0;"></div>
<svg class="a" style="left:993.5px;top:658.5px" width="12" height="12" viewBox="0 0 12 12"><rect x="4.5" y="0.3" width="3" height="11.4" fill="#7b7f8a"/><rect x="0.3" y="4.5" width="11.4" height="3" fill="#7b7f8a"/></svg>
<svg class="a" style="left:1078px;top:218px" width="20" height="21" viewBox="0 0 20 21"><path d="M1.5 1 H12 L18 7 V20 H1.5 Z" fill="none" stroke="#8a8c96" stroke-width="1.8" stroke-linejoin="round"/><path d="M11.5 1 V7.5 H18" fill="none" stroke="#8a8c96" stroke-width="1.4"/><path d="M5 10.5 H14.5 M5 13 H14.5 M5 15.5 H14.5 M5 18 H14.5" stroke="#8a8c96" stroke-width="1.1"/></svg>
<div class="t" style="left:1109px;top:218.50px;font-size:21.5px;color:#85878f;">Документ</div>
<svg class="a" style="left:1755px;top:222px" width="12" height="12" viewBox="0 0 12 12"><rect x="4.5" y="0" width="3" height="12" fill="#555"/><rect x="0" y="4.5" width="12" height="3" fill="#555"/></svg>
<div class="a" style="left:328px;top:741px;width:105px;height:35px;background:#05a55a;border-radius:4px;"></div>
<svg class="a" style="left:341px;top:752px" width="12" height="12" viewBox="0 0 12 12"><rect x="4.3" y="0" width="3.4" height="12" fill="#fff"/><rect x="0" y="4.3" width="12" height="3.4" fill="#fff"/></svg>
<div class="t" style="left:356px;top:751.31px;font-size:14.4px;color:#fff;">Добавить</div>
<div class="inp" style="left:437px;top:741px;width:445px;height:35px"></div>
<div class="a" style="left:860px;top:742px;width:1px;height:33px;background:#cfcfcf;"></div>
<svg class="a" style="left:450px;top:751px" width="15" height="15" viewBox="0 0 15 15"><circle cx="6" cy="6" r="4.5" fill="none" stroke="#999" stroke-width="1.8"/><path d="M9.2 9.2 L13.5 13.5" stroke="#999" stroke-width="2.2" stroke-linecap="round"/></svg>
<div class="t" style="left:468px;top:751.07px;font-size:14.45px;color:#999;">Наименование, артикул, артикул поставщика, штрихкод...</div>
<svg class="a" style="left:866px;top:757px" width="10" height="6" viewBox="0 0 10 6"><path d="M0.5 0.5 H9.5 L5 5.5 Z" fill="#777"/></svg>
<div class="a" style="left:888px;top:741px;width:107px;height:35px;background:#fff;border:1px solid #ddd;border-radius:4px;"></div>
<svg class="a" style="left:900px;top:752px" width="12" height="12" viewBox="0 0 12 12"><rect x="4.3" y="0" width="3.4" height="12" fill="#333"/><rect x="0" y="4.3" width="12" height="3.4" fill="#333"/></svg>
<div class="t" style="left:916px;top:751.22px;font-size:14.5px;color:#333;">Создать</div>
<svg class="a" style="left:973px;top:756px" width="9" height="5" viewBox="0 0 9 5"><path d="M0.5 0.5 H8.5 L4.5 4.5 Z" fill="#333"/></svg>
<svg class="a" style="left:1000px;top:749px" width="18" height="18" viewBox="0 0 18 18"><circle cx="9.0" cy="9.0" r="8.7" fill="#e2e3e7"/><circle cx="9.0" cy="9.0" r="3.6" fill="#fff"/><path d="M14.39 6.14 A6.1 6.1 0 0 1 14.39 11.86" fill="none" stroke="#fff" stroke-width="1.6"/><path d="M11.86 14.39 A6.1 6.1 0 0 1 6.14 14.39" fill="none" stroke="#fff" stroke-width="1.6"/><path d="M3.61 11.86 A6.1 6.1 0 0 1 3.61 6.14" fill="none" stroke="#fff" stroke-width="1.6"/><path d="M6.14 3.61 A6.1 6.1 0 0 1 11.86 3.61" fill="none" stroke="#fff" stroke-width="1.6"/></svg>
<div class="t" style="left:1022.5px;top:749.91px;font-size:17px;color:#222;font-weight:bold;">Цена</div>
<div class="t" style="left:1068px;top:748.41px;font-size:17px;color:#e03b3b;">*</div>
<div class="inp" style="left:1080px;top:741px;width:207px;height:36px"></div>
<div class="a" style="left:1264px;top:742px;width:1px;height:34px;background:#cfcfcf;"></div>
<svg class="a" style="left:1092px;top:752px" width="13" height="13" viewBox="0 0 13 13"><circle cx="6.5" cy="6.5" r="6" fill="#0aa657"/></svg>
<div class="t" style="left:1109.5px;top:752.02px;font-size:14.15px;color:#555;">Базовая</div>
<div class="t" style="left:1168.5px;top:753.34px;font-size:12.35px;color:#888;">(включает НДС)</div>
<svg class="a" style="left:1269px;top:756px" width="10" height="6" viewBox="0 0 10 6"><path d="M0.5 0.5 H9.5 L5 5.5 Z" fill="#777"/></svg>
<svg class="a" style="left:1291px;top:749px" width="18" height="18" viewBox="0 0 18 18"><circle cx="9.0" cy="9.0" r="8.7" fill="#e2e3e7"/><circle cx="9.0" cy="9.0" r="3.6" fill="#fff"/><path d="M14.39 6.14 A6.1 6.1 0 0 1 14.39 11.86" fill="none" stroke="#fff" stroke-width="1.6"/><path d="M11.86 14.39 A6.1 6.1 0 0 1 6.14 14.39" fill="none" stroke="#fff" stroke-width="1.6"/><path d="M3.61 11.86 A6.1 6.1 0 0 1 3.61 6.14" fill="none" stroke="#fff" stroke-width="1.6"/><path d="M6.14 3.61 A6.1 6.1 0 0 1 11.86 3.61" fill="none" stroke="#fff" stroke-width="1.6"/></svg>
<div class="t" style="left:1313px;top:749.91px;font-size:17px;color:#222;font-weight:bold;">Склад</div>
<div class="t" style="left:1368px;top:748.41px;font-size:17px;color:#e03b3b;">*</div>
<div class="inp" style="left:1381px;top:741px;width:149px;height:36px"></div>
<div class="a" style="left:1507px;top:742px;width:1px;height:34px;background:#cfcfcf;"></div>
<div class="t" style="left:1394px;top:751.81px;font-size:14.4px;color:#555;">Основной склад</div>
<svg class="a" style="left:1513px;top:756px" width="10" height="6" viewBox="0 0 10 6"><path d="M0.5 0.5 H9.5 L5 5.5 Z" fill="#777"/></svg>
<div class="a" style="left:2505px;top:755px;width:12px;height:3px;background:#666;"></div>
<div class="a" style="left:330px;top:802px;width:2194px;height:142px;background:#fff;"></div>
<div class="a" style="left:330px;top:911px;width:2194px;height:33px;background:#f9f9f9;"></div>
<div class="a" style="left:330px;top:802px;width:1px;height:142px;background:#efefef;"></div>
<div class="a" style="left:363px;top:802px;width:1px;height:142px;background:#efefef;"></div>
<div class="a" style="left:387px;top:802px;width:1px;height:142px;background:#efefef;"></div>
<div class="a" style="left:424px;top:802px;width:1px;height:142px;background:#efefef;"></div>
<div class="a" style="left:870px;top:802px;width:1px;height:142px;background:#efefef;"></div>
<div class="a" style="left:925px;top:802px;width:1px;height:142px;background:#efefef;"></div>
<div class="a" style="left:1058px;top:802px;width:1px;height:142px;background:#efefef;"></div>
<div class="a" style="left:1112px;top:802px;width:1px;height:142px;background:#efefef;"></div>
<div class="a" style="left:1362px;top:802px;width:1px;height:142px;background:#efefef;"></div>
<div class="a" style="left:1612px;top:802px;width:1px;height:142px;background:#efefef;"></div>
<div class="a" style="left:1709px;top:802px;width:1px;height:142px;background:#efefef;"></div>
<div class="a" style="left:1958px;top:802px;width:1px;height:142px;background:#efefef;"></div>
<div class="a" style="left:2078px;top:802px;width:1px;height:142px;background:#efefef;"></div>
<div class="a" style="left:2295px;top:802px;width:1px;height:142px;background:#efefef;"></div>
<div class="a" style="left:2482px;top:802px;width:1px;height:142px;background:#efefef;"></div>
<div class="a" style="left:2524px;top:802px;width:1px;height:142px;background:#efefef;"></div>
<div class="a" style="left:330px;top:802px;width:2194px;height:1px;background:#efefef;"></div>
<div class="a" style="left:330px;top:841px;width:2194px;height:1px;background:#efefef;"></div>
<div class="a" style="left:330px;top:911px;width:2194px;height:1px;background:#efefef;"></div>
<div class="a" style="left:330px;top:943px;width:2194px;height:1px;background:#efefef;"></div>
<div class="a" style="left:337px;top:809px;width:20px;height:20px;background:#fff;border:1px solid #b8b8b8;border-radius:3px;"></div>
<div class="t" style="left:370px;top:817.32px;font-size:14.5px;color:#333;font-weight:bold;">#</div>
<svg class="a" style="left:394px;top:817px" width="16" height="13" viewBox="0 0 16 13"><rect x="0.7" y="0.7" width="14.6" height="11.6" fill="none" stroke="#333" stroke-width="1.4"/><path d="M2 11 L6 6 L8.5 8.5 L11 5.5 L14 11 Z" fill="#333"/><circle cx="4.5" cy="4" r="1.4" fill="#333"/></svg>
<div class="t" style="left:432px;top:817.32px;font-size:14.5px;color:#333;font-weight:bold;">Наименование</div>
<div class="t" style="left:877px;top:817.32px;font-size:14.5px;color:#333;font-weight:bold;">Арт.</div>
<div class="t" style="left:932px;top:817.32px;font-size:14.5px;color:#333;font-weight:bold;">Кол-во</div>
<div class="t" style="left:1065px;top:817.32px;font-size:14.5px;color:#333;font-weight:bold;">Мера</div>
<div class="t" style="left:1119px;top:817.32px;font-size:14.5px;color:#333;font-weight:bold;">Цена</div>
<div class="t" style="left:1369px;top:817.32px;font-size:14.5px;color:#333;font-weight:bold;">Сумма</div>
<div class="t" style="left:1619px;top:817.32px;font-size:14.5px;color:#333;font-weight:bold;">Скидка</div>
<div class="t" style="left:1715px;top:817.32px;font-size:14.5px;color:#333;font-weight:bold;">Итого</div>
<div class="t" style="left:1964px;top:817.32px;font-size:14.5px;color:#333;font-weight:bold;">НДС</div>
<div class="t" style="left:2084px;top:817.32px;font-size:14.5px;color:#333;font-weight:bold;">Остатки</div>
<div class="t" style="left:2301px;top:817.32px;font-size:14.5px;color:#333;font-weight:bold;">Вес, кг</div>
<div class="a" style="left:2488px;top:809px;width:25px;height:26px;background:#f4f4f4;border:1px solid #e0e0e0;border-radius:3px;"></div>
<svg class="a" style="left:2495px;top:814px" width="11" height="14" viewBox="0 0 11 14"><path d="M0.5 2.5 H10.5 M3.5 2.5 V1 H7.5 V2.5" fill="none" stroke="#8d8d98" stroke-width="1.1"/><path d="M1.5 3.5 H9.5 V13 H1.5 Z" fill="none" stroke="#8d8d98" stroke-width="1.2"/><path d="M3.8 5.5 V11 M5.5 5.5 V11 M7.2 5.5 V11" stroke="#8d8d98" stroke-width="0.9"/></svg>
<div class="t" style="left:371px;top:851.22px;font-size:14.5px;color:#333;">1</div>
<svg class="a" style="left:394px;top:849px" width="24" height="25" viewBox="0 0 24 25"><circle cx="12" cy="11.5" r="9.5" fill="#ec5a2c"/><circle cx="7.5" cy="9" r="2.8" fill="#e8336f"/><circle cx="13" cy="6" r="2.4" fill="#f5b52a"/><circle cx="16.5" cy="11" r="2.8" fill="#f48a22"/><circle cx="10.5" cy="15" r="2.8" fill="#f4e13a"/><circle cx="15.5" cy="16.5" r="2.2" fill="#e8336f"/><circle cx="12" cy="10.5" r="1.3" fill="#2a1a10"/><circle cx="6.5" cy="14" r="1.1" fill="#2a1a10"/><circle cx="17" cy="7" r="1" fill="#2a1a10"/><path d="M3 6 L5 8 M20 5 L18.5 7 M20 15 L18 14" stroke="#4f9a3c" stroke-width="1.5"/><ellipse cx="12" cy="22.5" rx="5" ry="1.2" fill="#eee"/></svg>
<div class="a" style="left:431px;top:851px;width:20px;height:17px;background:#ececec;border-radius:3px;"></div>
<div class="t" style="left:437.2px;top:851.87px;font-size:13.5px;color:#222;">т</div>
<div class="t" style="left:455px;top:851.39px;font-size:14.3px;color:#3a7fc2;">Букет № 2</div>
<svg class="a" style="left:846px;top:889px" width="19" height="14" viewBox="0 0 19 14"><rect x="0" y="0" width="18" height="13" rx="1.5" fill="#8d8d98"/><rect x="0" y="3.5" width="18" height="2.5" fill="#fff"/><path d="M2 10.5 H5 M6 10.5 H8" stroke="#fff" stroke-width="1"/></svg>
<div class="a" style="left:877px;top:848px;width:43px;height:22px;background:#e4e4e4;border-radius:3px;"></div>
<div class="t" style="left:886px;top:852.37px;font-size:13.5px;color:#333;font-weight:bold;">Т65</div>
<div class="a" style="left:932px;top:848px;width:28px;height:26px;background:#f4f4f4;border:1px solid #ddd;border-radius:3px 0 0 3px;"></div>
<div class="a" style="left:940px;top:859px;width:12px;height:3px;background:#6a6a6a;"></div>
<div class="inp" style="left:959px;top:848px;width:65px;height:26px;border-color:#ccc;border-radius:0"></div>
<div class="t" style="left:967px;top:855.15px;font-size:14px;color:#333;">1</div>
<div class="a" style="left:1023px;top:848px;width:27px;height:26px;background:#f4f4f4;border:1px solid #ddd;border-radius:0 3px 3px 0;"></div>
<svg class="a" style="left:1030px;top:855px" width="13" height="13" viewBox="0 0 13 13"><rect x="5" y="0.5" width="3" height="12" fill="#333"/><rect x="0.5" y="5" width="12" height="3" fill="#333"/></svg>
<div class="t" style="left:1066px;top:851.22px;font-size:14.5px;color:#333;">компл</div>
<div class="t" style="left:1120px;top:851.22px;font-size:14.5px;color:#3a7fc2;">1 900,00 <span class="rub">Р</span></div>
<div class="a" style="left:1120px;top:866px;width:68px;height:1px;border-top:1px dashed #9bb8d6;"></div>
<div class="t" style="left:1369px;top:851.22px;font-size:14.5px;color:#3a7fc2;">1 900,00 <span class="rub">Р</span></div>
<div class="a" style="left:1369px;top:866px;width:68px;height:1px;border-top:1px dashed #9bb8d6;"></div>
<div class="t" style="left:1619px;top:851.22px;font-size:14.5px;color:#333;">10 %</div>
<div class="t" style="left:1716px;top:851.73px;font-size:13.9px;color:#222;font-weight:bold;">1 710,00 <span class="rub">Р</span></div>
<div class="inp" style="left:1965px;top:848px;width:107px;height:36px;border-color:#bdbdbd;border-radius:4px"></div>
<div class="t" style="left:1982px;top:859.22px;font-size:14.5px;color:#555;">20 %</div>
<svg class="a" style="left:2050px;top:861px" width="13" height="8" viewBox="0 0 13 8"><path d="M1 1 L6.5 6.5 L12 1" fill="none" stroke="#333" stroke-width="2"/></svg>
<div class="t" style="left:1964px;top:886.32px;font-size:14.5px;color:#333;">285,00 <span class="rub">Р</span></div>
<div class="t" style="left:2085px;top:851.22px;font-size:14.5px;color:#d9363e;font-weight:bold;">-4</div>
<div class="t" style="left:2301px;top:851.22px;font-size:14.5px;color:#333;">0.46</div>
<div class="t" style="left:432px;top:921.22px;font-size:14.5px;color:#222;font-weight:bold;">Итого:</div>
<div class="t" style="left:1369px;top:921.73px;font-size:13.9px;color:#222;font-weight:bold;">1 900,00 <span class="rub">Р</span></div>
<div class="t" style="left:1619px;top:921.73px;font-size:13.9px;color:#222;font-weight:bold;">190,00 <span class="rub">Р</span></div>
<div class="t" style="left:1716px;top:921.73px;font-size:13.9px;color:#222;font-weight:bold;">1 710,00 <span class="rub">Р</span></div>
<div class="t" style="left:1965px;top:921.73px;font-size:13.9px;color:#222;font-weight:bold;">285,00 <span class="rub">Р</span></div>
<div class="t" style="left:2301px;top:921.73px;font-size:13.9px;color:#222;font-weight:bold;">0.46</div>
<div class="a" style="left:330px;top:975px;width:160px;height:35px;background:#f4f4f4;border:1px solid #d9d9d9;border-radius:3px;"></div>
<svg class="a" style="left:343px;top:986px" width="12" height="12" viewBox="0 0 12 12"><rect x="4.4" y="0" width="3.2" height="12" fill="#333"/><rect x="0" y="4.4" width="12" height="3.2" fill="#333"/></svg>
<div class="t" style="left:358px;top:984.92px;font-size:14.5px;color:#444;">Дисконтная карта</div>
<div class="a" style="left:495px;top:975px;width:145px;height:35px;background:#f4f4f4;border:1px solid #d9d9d9;border-radius:3px;"></div>
<svg class="a" style="left:508px;top:986px" width="12" height="12" viewBox="0 0 12 12"><rect x="4.4" y="0" width="3.2" height="12" fill="#333"/><rect x="0" y="4.4" width="12" height="3.2" fill="#333"/></svg>
<div class="t" style="left:523px;top:984.92px;font-size:14.5px;color:#444;">Бонусная карта</div>
<div class="a" style="left:645px;top:975px;width:163px;height:35px;background:#f4f4f4;border:1px solid #d9d9d9;border-radius:3px;"></div>
<svg class="a" style="left:658px;top:986px" width="12" height="12" viewBox="0 0 12 12"><rect x="4.4" y="0" width="3.2" height="12" fill="#333"/><rect x="0" y="4.4" width="12" height="3.2" fill="#333"/></svg>
<div class="t" style="left:673px;top:984.92px;font-size:14.5px;color:#444;">Подарочная карта</div>
<div class="a" style="left:330px;top:1034px;width:2194px;height:139px;background:#f5f5f5;"></div>
<div class="t" style="left:340px;top:1041.18px;font-size:16.8px;color:#333;font-weight:bold;">Режим скидки</div>
<svg class="a" style="left:340px;top:1074px" width="15" height="15" viewBox="0 0 15 15"><circle cx="7.5" cy="7.5" r="6.7" fill="#fff" stroke="#1a73e8" stroke-width="1.5"/><circle cx="7.5" cy="7.5" r="4.3" fill="#1a73e8"/></svg>
<div class="t" style="left:360px;top:1075.18px;font-size:16.8px;color:#333;font-weight:bold;">Автоматическая</div>
<svg class="a" style="left:501px;top:1074px" width="15" height="15" viewBox="0 0 15 15"><circle cx="7.5" cy="7.5" r="6.7" fill="#fff" stroke="#555" stroke-width="1.2"/></svg>
<div class="t" style="left:521px;top:1075.18px;font-size:16.8px;color:#333;font-weight:bold;">Ручная</div>
<svg class="a" style="left:585px;top:1074px" width="15" height="15" viewBox="0 0 15 15"><circle cx="7.5" cy="7.5" r="6.7" fill="#fff" stroke="#555" stroke-width="1.2"/></svg>
<div class="t" style="left:605px;top:1075.18px;font-size:16.8px;color:#333;font-weight:bold;">Промокод</div>
<svg class="a" style="left:694px;top:1074px" width="15" height="15" viewBox="0 0 15 15"><circle cx="7.5" cy="7.5" r="6.7" fill="#fff" stroke="#555" stroke-width="1.2"/></svg>
<div class="t" style="left:715px;top:1075.18px;font-size:16.8px;color:#333;font-weight:bold;">Наценка</div>
<div class="t" style="left:340px;top:1119.69px;font-size:16.9px;color:#999;">Применены скидки:</div>
<div class="a" style="left:340px;top:1151px;width:886px;height:17px;border:3px dashed #dcdcdc;"></div>
<div class="t" style="left:1260.5px;top:1040.69px;font-size:16.9px;color:#333;font-weight:bold;">Полная цена:</div>
<div class="t" style="left:1260.5px;top:1064.69px;font-size:16.9px;color:#333;font-weight:bold;">Скидка:</div>
<div class="t" style="left:1260.5px;top:1089.58px;font-size:19.4px;color:#333;font-weight:bold;">Итого:</div>
<div class="t" style="left:1260.5px;top:1117.49px;font-size:16.9px;color:#333;font-weight:bold;">В т.ч. НДС:</div>
<div class="t" style="left:1260.5px;top:1144.29px;font-size:16.9px;color:#333;font-weight:bold;">Оплачено:</div>
<div class="a" style="left:1260px;top:1138px;width:1254px;height:1px;border-top:1px dashed #ddd;"></div>
<div class="t" style="right:31px;top:1041.45px;font-size:16px;color:#444;">1 900,00 <span class="rub">Р</span></div>
<div class="t" style="right:125px;top:1067.99px;font-size:13px;color:#999;">~10.00 %</div>
<div class="t" style="right:31px;top:1065.45px;font-size:16px;color:#444;">190,00 <span class="rub">Р</span></div>
<div class="t" style="right:31px;top:1089.91px;font-size:19px;color:#333;font-weight:bold;">1 710,00 <span class="rub">Р</span></div>
<div class="t" style="right:31px;top:1118.25px;font-size:16px;color:#444;">285,00 <span class="rub">Р</span></div>
<div class="t" style="right:31px;top:1142.95px;font-size:16px;color:#444;">1 710.00 <span class="rub">Р</span></div>
<div class="a" style="left:2436px;top:1162px;width:78px;height:3px;background:#10a35a;border-radius:2px;"></div>
<div class="a" style="left:330px;top:1213px;width:20px;height:21px;background:#fff;border:1px solid #b8b8b8;border-radius:3px;"></div>
<div class="t" style="left:357px;top:1214.33px;font-size:16.5px;color:#222;font-weight:bold;">Резерв</div>
<svg class="a" style="left:1002px;top:1209px" width="20" height="20" viewBox="0 0 20 20"><circle cx="10" cy="10" r="8.8" fill="none" stroke="#555" stroke-width="1.6"/><text x="10" y="15" font-family="Liberation Sans" font-size="14" fill="#555" text-anchor="middle">?</text></svg>
<svg class="a" style="left:318px;top:1288px" width="20" height="17" viewBox="0 0 20 17"><path d="M0.5 1.5 V7 L8 14.5 L14 8.5 L6.5 1 H1 Z" fill="#333"/><circle cx="3.5" cy="4" r="1.4" fill="#e9eaed"/><path d="M9 1 L16.5 8.5 L10.5 14.5" fill="none" stroke="#333" stroke-width="1.8"/></svg>
<div class="t" style="left:342px;top:1289.70px;font-size:16.3px;color:#222;font-weight:bold;">Теги</div>
</body></html>
